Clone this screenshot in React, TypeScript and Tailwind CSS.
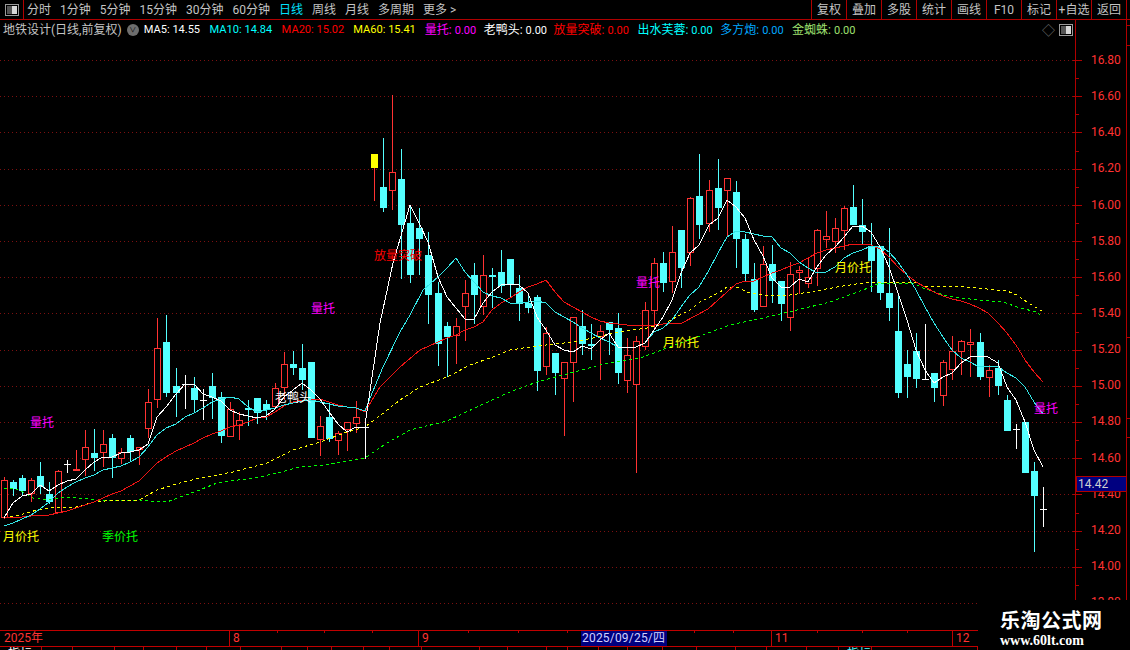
const periods = ['分时', '1分钟', '5分钟', '15分钟', '30分钟', '60分钟', '日线', '周线', '月线', '多周期', '更多 >'];
const buttons = ['复权', '叠加', '多股', '统计', '画线', 'F10', '标记', '+自选', '返回'];
const legend = [
  { label: 'MA5', value: '14.55', cls: 'text-white text-[11.1px] mr-[1px]' },
  { label: 'MA10', value: '14.84', cls: 'text-[#00ffff] text-[11.1px] mr-[1px]' },
  { label: 'MA20', value: '15.02', cls: 'text-[#ff0000] text-[11.1px] mr-[0.5px]' },
  { label: 'MA60', value: '15.41', cls: 'text-[#ffff00] text-[11.1px] mr-[0.5px]' },
  { label: '量托', value: '0.00', cls: 'text-[#ff00ff] -mr-[1px]' },
  { label: '老鸭头', value: '0.00', cls: 'text-white -mr-[2px]' },
  { label: '放量突破', value: '0.00', cls: 'text-[#ff0000]' },
  { label: '出水芙蓉', value: '0.00', cls: 'text-[#00ffff] -mr-[1px]' },
  { label: '多方炮', value: '0.00', cls: 'text-[#00a8ff]' },
  { label: '金蜘蛛', value: '0.00', cls: 'text-[#9fe070]' },
];
const prices = ['16.80', '16.60', '16.40', '16.20', '16.00', '15.80', '15.60', '15.40', '15.20', '15.00', '14.80', '14.60', '14.40', '14.20', '14.00', '13.80'];
const gridY = [60, 96, 132, 169, 205, 241, 277, 313, 350, 386, 422, 458, 494, 531, 567, 603];

// x, high, body top, body bottom, low, kind (c cyan, r red, w white cross, y yellow)
const candles: [number, number, number, number, number, string][] = [
  [4, 477, 480, 518, 519, 'r'], [13, 480, 482, 489, 496, 'c'], [22, 475, 478, 491, 495, 'c'], [31, 478, 480, 494, 502, 'r'],
  [40, 462, 476, 487, 494, 'c'], [49, 482, 494, 502, 504, 'c'], [58, 470, 471, 513, 513, 'r'], [67, 460, 464, 464, 473, 'w'],
  [76, 450, 469, 471, 471, 'r'], [85, 430, 447, 460, 476, 'r'], [94, 429, 453, 458, 471, 'c'], [103, 430, 444, 453, 467, 'r'],
  [112, 434, 438, 458, 478, 'c'], [121, 448, 452, 459, 464, 'r'], [130, 435, 438, 452, 462, 'c'], [139, 447, 447, 450, 465, 'r'],
  [148, 389, 402, 429, 438, 'r'], [157, 318, 348, 400, 408, 'r'], [166, 315, 342, 393, 397, 'c'], [176, 368, 386, 393, 417, 'c'],
  [185, 375, 384, 384, 409, 'w'], [194, 377, 388, 400, 413, 'c'], [203, 389, 400, 400, 420, 'w'], [212, 373, 386, 398, 419, 'c'],
  [221, 392, 397, 436, 443, 'c'], [230, 402, 409, 437, 437, 'r'], [239, 412, 420, 426, 440, 'r'], [248, 400, 408, 410, 426, 'c'],
  [257, 398, 398, 413, 424, 'c'], [266, 400, 404, 410, 420, 'c'], [275, 383, 388, 407, 407, 'r'], [284, 352, 364, 388, 400, 'r'],
  [293, 351, 364, 368, 375, 'c'], [302, 344, 368, 380, 390, 'c'], [311, 362, 362, 438, 438, 'c'], [320, 416, 426, 440, 456, 'r'],
  [329, 403, 417, 439, 442, 'c'], [338, 431, 433, 441, 455, 'r'], [347, 422, 422, 430, 451, 'r'], [356, 401, 417, 424, 433, 'r'],
  [365, 418, 427, 427, 459, 'w'], [374, 154, 154, 168, 201, 'y'], [383, 138, 187, 208, 212, 'c'], [392, 95, 172, 191, 210, 'r'],
  [401, 149, 179, 225, 279, 'c'], [410, 205, 223, 275, 283, 'c'], [419, 208, 228, 239, 275, 'c'], [428, 232, 255, 295, 324, 'c'],
  [438, 282, 293, 344, 366, 'c'], [447, 322, 326, 337, 377, 'c'], [456, 318, 326, 336, 364, 'r'], [465, 280, 293, 307, 341, 'r'],
  [474, 263, 275, 295, 324, 'c'], [483, 255, 275, 307, 315, 'r'], [492, 268, 275, 277, 308, 'c'], [501, 250, 272, 286, 293, 'c'],
  [510, 259, 259, 284, 297, 'c'], [519, 275, 288, 304, 321, 'c'], [528, 295, 303, 308, 313, 'c'], [537, 295, 297, 371, 391, 'c'],
  [546, 327, 333, 367, 375, 'r'], [555, 353, 353, 373, 395, 'c'], [564, 362, 362, 379, 436, 'r'], [573, 317, 317, 363, 402, 'r'],
  [582, 310, 326, 344, 355, 'c'], [591, 324, 344, 346, 360, 'c'], [600, 325, 331, 337, 380, 'r'], [609, 322, 322, 330, 355, 'c'],
  [618, 313, 328, 373, 384, 'c'], [627, 338, 355, 381, 393, 'r'], [636, 336, 341, 385, 473, 'r'], [645, 302, 310, 347, 350, 'r'],
  [654, 258, 263, 311, 330, 'r'], [663, 252, 263, 283, 292, 'c'], [672, 226, 252, 282, 293, 'r'], [681, 230, 230, 268, 288, 'c'],
  [690, 197, 198, 253, 266, 'r'], [699, 154, 196, 225, 239, 'c'], [709, 180, 190, 224, 232, 'r'], [718, 159, 188, 208, 230, 'c'],
  [727, 178, 178, 191, 237, 'r'], [736, 181, 192, 239, 268, 'c'], [745, 234, 239, 274, 281, 'c'], [754, 263, 279, 310, 312, 'c'],
  [763, 246, 264, 307, 307, 'r'], [772, 245, 264, 281, 303, 'c'], [781, 281, 281, 304, 321, 'c'], [790, 262, 274, 318, 331, 'r'],
  [799, 266, 270, 273, 294, 'r'], [808, 258, 277, 284, 288, 'r'], [817, 229, 230, 269, 286, 'r'], [826, 211, 236, 240, 248, 'r'],
  [835, 218, 228, 242, 253, 'r'], [844, 206, 208, 231, 250, 'r'], [853, 185, 207, 225, 225, 'c'], [862, 199, 225, 232, 245, 'c'],
  [871, 223, 246, 261, 292, 'c'], [880, 246, 246, 293, 300, 'c'], [889, 228, 293, 308, 321, 'c'], [898, 293, 331, 393, 398, 'c'],
  [907, 350, 364, 377, 398, 'c'], [916, 333, 351, 379, 388, 'c'], [925, 324, 379, 379, 379, 'w'], [934, 373, 373, 388, 402, 'c'],
  [943, 360, 362, 396, 406, 'r'], [952, 336, 351, 370, 380, 'r'], [961, 340, 341, 352, 375, 'r'], [970, 329, 342, 345, 377, 'r'],
  [980, 333, 342, 377, 380, 'c'], [989, 365, 370, 378, 397, 'r'], [998, 360, 368, 386, 395, 'c'], [1007, 395, 400, 431, 431, 'c'],
  [1016, 424, 429, 429, 449, 'w'], [1025, 422, 422, 473, 473, 'c'], [1034, 462, 471, 496, 552, 'c'], [1043, 487, 509, 509, 527, 'w'],
];

const ma5 = '4,518 7,513 13,503 22,496 31,494 40,485 49,491 58,485 67,481 76,479 85,470 94,462 103,457 112,457 121,453 130,452 139,450 148,444 157,417 166,407 176,394 185,384 194,384 203,394 212,397 221,401 230,410 239,414 248,416 257,418 266,416 275,409 284,397 293,390 302,383 311,390 320,399 329,412 338,424 347,432 356,427 365,427 366,418 380,323 393,263 410,205 419,223 428,242 438,277 447,297 456,308 465,319 474,319 483,303 492,292 501,285 510,284 519,285 528,293 537,317 546,330 555,345 564,350 573,352 582,346 591,349 600,340 609,333 618,347 627,347 636,347 645,343 654,330 663,317 672,300 681,273 690,253 699,245 709,225 718,218 727,200 736,207 745,218 754,240 763,256 772,278 781,287 790,287 799,279 808,282 817,267 826,255 835,247 844,237 853,226 862,226 871,232 880,247 889,267 898,293 907,320 916,350 925,370 934,383 943,377 952,373 961,363 970,357 979,356 988,357 998,363 1007,387 1016,400 1025,422 1034,450 1043,467';
const ma10 = '4,526 13,523 22,519 31,515 40,509 49,502 58,493 67,487 76,482 85,478 94,475 103,470 112,468 121,466 130,462 139,457 148,447 157,435 166,428 176,424 185,417 194,413 203,408 212,402 221,399 230,397 239,399 248,407 257,412 266,410 275,408 284,405 293,403 302,401 311,400 320,402 329,404 338,406 347,407 356,408 365,411 368,403 383,367 400,332 410,315 423,290 438,277 447,268 456,258 465,272 474,282 483,292 492,296 501,298 510,303 519,303 528,302 537,301 546,303 555,312 564,317 573,322 582,328 591,333 600,338 609,342 618,347 627,347 636,347 645,343 654,332 663,328 672,320 681,307 690,295 699,287 709,270 718,253 727,237 736,231 745,232 754,234 763,236 772,237 781,248 790,253 799,262 808,268 817,273 826,272 835,267 844,258 853,253 862,250 871,246 880,246 889,252 898,262 907,275 916,290 925,307 934,323 943,337 952,350 961,358 970,362 979,367 988,366 998,367 1007,373 1016,378 1025,387 1034,402 1043,414';
const ma20 = '4,518 13,517 22,517 31,516 40,515 49,515 58,513 67,511 76,508 85,505 94,502 103,498 112,494 121,491 130,486 139,481 148,472 157,463 166,457 176,451 185,447 194,443 203,438 212,434 221,431 230,427 239,425 248,422 257,418 266,417 275,412 284,406 293,402 302,400 311,400 320,399 329,402 338,405 347,407 356,408 365,412 380,387 400,367 420,350 438,342 447,338 456,335 465,330 474,327 483,322 492,310 501,303 510,298 519,292 528,287 537,284 546,280 555,292 564,302 573,307 582,312 591,317 600,321 609,323 618,324 627,325 636,325 645,326 654,325 663,324 672,323 682,323 708,309 718,300 727,292 736,284 745,281 754,281 763,277 772,273 781,270 790,266 799,263 808,258 817,253 826,250 835,248 844,246 853,244 862,244 871,245 880,249 889,257 898,267 907,275 916,282 925,287 934,292 943,296 952,299 961,301 970,304 979,308 988,313 998,323 1007,333 1016,345 1025,360 1034,372 1043,382';
const ma60 = '4,518 20,515 37,510 50,508 76,507 94,502 117,500 139,500 148,495 157,490 180,483 200,478 233,472 267,463 293,450 320,442 347,432 365,427 377,418 400,400 420,387 447,377 470,365 493,357 510,350 537,346 573,342 593,338 618,332 647,328 663,324 690,310 700,302 720,292 727,287 737,287 747,292 763,295 790,295 810,292 837,287 863,283 880,282 917,283 925,286 967,287 987,289 1007,291 1017,295 1027,302 1042,311';
const ma120 = '4,488 13,488 23,492 33,498 47,500 67,497 90,499 100,501 140,500 150,501 167,502 180,497 197,491 217,483 260,477 277,473 300,467 323,465 347,461 365,458 387,443 410,430 447,421 477,407 510,392 537,382 563,375 600,365 643,357 667,348 697,337 730,325 763,318 797,310 830,302 863,290 880,283 913,283 923,288 947,296 960,298 980,300 1003,302 1020,308 1037,312 1042,317';

const minorTicks = [78, 114, 151, 187, 223, 259, 295, 332, 368, 404, 440, 476, 513, 549, 585];
const barTicks = [277, 324, 372, 468, 518, 567, 694, 733, 817, 862, 907];
const tabEdges = [42, 73, 115, 144, 177, 207, 241, 282, 308, 332, 364, 390, 422, 480, 508, 547, 568, 599, 628, 663, 697, 736, 767, 807, 839, 872, 978];

function Candle({ c }: { c: [number, number, number, number, number, string] }) {
  const [x, high, top, bot, low, kind] = c;
  const mid = x + 0.5;
  if (kind === 'w') {
    return (
      <g stroke="#ffffff">
        <line x1={mid} x2={mid} y1={high} y2={low} />
        <line x1={x - 3} x2={x + 4} y1={top + 0.5} y2={top + 0.5} />
      </g>
    );
  }
  if (kind === 'c') {
    return (
      <g>
        <line x1={mid} x2={mid} y1={high} y2={low} stroke="#54ffff" />
        <rect x={x - 3} y={top} width={7} height={Math.max(bot - top, 1)} fill="#54ffff" />
      </g>
    );
  }
  if (kind === 'y') {
    return (
      <g>
        <line x1={mid} x2={mid} y1={high} y2={low} stroke="#ff3232" />
        <rect x={x - 3} y={top} width={7} height={bot - top} fill="#ffff00" />
      </g>
    );
  }
  return (
    <g>
      <line x1={mid} x2={mid} y1={high} y2={low} stroke="#ff3232" />
      <rect x={x - 2.5} y={top + 0.5} width={6} height={Math.max(bot - top - 1, 1)} fill="#000000" stroke="#ff3232" />
    </g>
  );
}

function ChartLines() {
  return (
    <svg className="block" width={1075} height={590} viewBox="0 40 1075 590" shapeRendering="crispEdges">
      {gridY.map((y) => (
        <line key={y} x1={0} x2={1075} y1={y + 0.5} y2={y + 0.5} stroke="#7c1010" strokeDasharray="1 3" />
      ))}
      {candles.map((c) => (
        <Candle key={c[0]} c={c} />
      ))}
      <polyline points={ma120} fill="none" stroke="#00ff00" strokeDasharray="3 3" />
      <polyline points={ma60} fill="none" stroke="#ffff00" strokeDasharray="3 3" />
      <polyline points={ma20} fill="none" stroke="#f01414" />
      <polyline points={ma10} fill="none" stroke="#34e6e6" />
      <polyline points={ma5} fill="none" stroke="#ffffff" />
    </svg>
  );
}

function PanelIcon() {
  return (
    <svg width={14} height={12} viewBox="0 0 14 12" shapeRendering="crispEdges">
      <rect x={0.5} y={0.5} width={13} height={11} rx={1} fill="#000" stroke="#9a9a9a" />
      <rect x={2} y={2} width={5} height={8} fill="#555555" />
      <rect x={7} y={2} width={5} height={8} fill="#d8d8d8" />
    </svg>
  );
}

export default function App() {
  return (
    <div className="relative flex h-[650px] w-[1130px] overflow-hidden bg-black font-['Roboto','Noto_Sans_CJK_SC',sans-serif] text-[12px] text-[#c4c4c4]">
      <div className="flex w-[1076px] shrink-0 flex-col border-r border-[#b00000]">
        <div className="flex h-[19px] shrink-0 items-center">
          <div className="flex h-full w-[24px] shrink-0 items-center justify-center border-r border-[#b00000]">
            <PanelIcon />
          </div>
          <div className="ml-[3px] flex gap-[9px] whitespace-nowrap">
            {periods.map((p) => (
              <span key={p} className={p === '日线' ? 'text-[#00e0ff]' : ''}>
                {p}
              </span>
            ))}
          </div>
        </div>
        <div className="flex h-[21px] shrink-0 items-center border-t border-[#b00000] whitespace-nowrap">
          <span className="ml-[3px] text-[#c4c4c4]">地铁设计(日线,前复权)</span>
          <span className="ml-[5px] flex h-[12px] w-[12px] items-center justify-center rounded-full bg-[#6e6e6e] text-[7px] leading-none text-black">∨</span>
          <div className="ml-[5px] flex items-center gap-[8.5px]">
            {legend.map((l) => (
              <span key={l.label} className={l.cls}>
                {l.label}: <span className="text-[11px]">{l.value}</span>
              </span>
            ))}
          </div>
          <span className="ml-auto mr-[4px] text-[13px] leading-none text-[#6e6e6e]">◇</span>
          <span className="mr-[2px] flex"><PanelIcon /></span>
        </div>
        <div className="relative h-[590px] shrink-0">
          <ChartLines />
          <span className="absolute left-[311px] top-[260px] text-[#ff00ff]">量托</span>
          <span className="absolute left-[30px] top-[374px] text-[#ff00ff]">量托</span>
          <span className="absolute left-[3px] top-[488px] text-[#ffff00]">月价托</span>
          <span className="absolute left-[102px] top-[488px] text-[#00ff00]">季价托</span>
          <span className="absolute left-[275px] top-[349px] text-white">老鸭头</span>
          <span className="absolute left-[374px] top-[207px] text-[#ff0000]">放量突破</span>
          <span className="absolute left-[636px] top-[234px] text-[#ff00ff]">量托</span>
          <span className="absolute left-[663px] top-[294px] text-[#ffff00]">月价托</span>
          <span className="absolute left-[835px] top-[219px] text-[#ffff00]">月价托</span>
          <span className="absolute left-[1034px] top-[360px] text-[#ff00ff]">量托</span>
        </div>
        <div className="relative flex h-[17px] w-[978px] shrink-0 border-y border-[#c00000] text-[#ff3232] leading-[15px]">
          <span className="w-[229px] pl-[4px]">2025年</span>
          <span className="w-[189px] border-l border-[#c00000] pl-[3px]">8</span>
          <span className="w-[163px] border-l border-[#c00000] pl-[3px]">9</span>
          <span className="w-[86px] bg-[#000080] pl-[1px] tracking-[0.2px] text-[#d0d0ff] whitespace-nowrap">2025/09/25/四</span>
          <span className="w-[104px]" />
          <span className="w-[181px] border-l border-[#c00000] pl-[3px]">11</span>
          <span className="w-[26px] border-l border-[#c00000] pl-[3px]">12</span>
          {barTicks.map((x) => (
            <span key={x} className="absolute top-0 h-[2px] w-px bg-[#c00000]" style={{ left: x }} />
          ))}
        </div>
        <div className="flex h-[3px] w-[978px] shrink-0 overflow-hidden">
          {tabEdges.map((x, i) => (
            <span
              key={x}
              className={`border-r border-[#c00000] pl-[8px] leading-[14px] ${i === 25 ? 'text-[#54ffff]' : 'text-white'}`}
              style={{ width: x - (i === 0 ? 0 : tabEdges[i - 1]) }}
            >
              {i === 0 || i === 25 ? '指标' : ''}
            </span>
          ))}
        </div>
      </div>

      <div className="relative flex w-[54px] shrink-0 flex-col">
        <div className="flex h-[20px] shrink-0 border-b border-[#b00000]" />
        <div className="flex flex-col pl-[15px] pt-[22px] text-[#ff3232]">
          {prices.map((p) => (
            <span key={p} className="flex h-[36.15px] shrink-0 items-center leading-none tracking-[-0.1px]">
              {p}
            </span>
          ))}
        </div>
        <span className="absolute left-0 top-[476px] h-[16px] w-[51px] border border-[#b00000] bg-[#000080] pl-[1px] leading-[14px] text-[#d0d0d0]">
          14.42
        </span>
      </div>

      <div className="absolute right-0 top-0 flex h-[20px] border-b border-[#b00000] bg-black">
        {buttons.map((b) => (
          <span key={b} className="flex h-full w-[35px] items-center justify-center border-l border-[#b00000] whitespace-nowrap">
            {b}
          </span>
        ))}
        <span className="h-full w-[4px] border-l border-[#b00000]" />
      </div>

      <svg className="absolute left-[1070px] top-[20px]" width={60} height={580} viewBox="1070 20 60 580" shapeRendering="crispEdges">
        {gridY.slice(0, 15).map((y) => (
          <line key={y} x1={1073} x2={1082} y1={y + 0.5} y2={y + 0.5} stroke="#b00000" />
        ))}
        {minorTicks.map((y) => (
          <line key={y} x1={1076} x2={1079} y1={y + 0.5} y2={y + 0.5} stroke="#b00000" />
        ))}
        <line x1={1126.5} x2={1126.5} y1={20} y2={600} stroke="#b00000" />
        {[25, 45, 337, 418, 437].map((y) => (
          <line key={y} x1={1127} x2={1130} y1={y + 0.5} y2={y + 0.5} stroke="#b00000" />
        ))}
      </svg>

      <div className="absolute left-[978px] top-[600px] flex h-[50px] w-[152px] flex-col bg-black pl-[22px] pt-[9px] text-white">
        <span className="whitespace-nowrap text-[20px] font-bold leading-[22px] tracking-[0.5px] font-['Noto_Sans_CJK_SC',sans-serif]">乐淘公式网</span>
        <span className="mt-[2px] whitespace-nowrap text-[14px] font-bold leading-[16px] font-['Liberation_Serif',serif]">www.60lt.com</span>
      </div>
    </div>
  );
}
